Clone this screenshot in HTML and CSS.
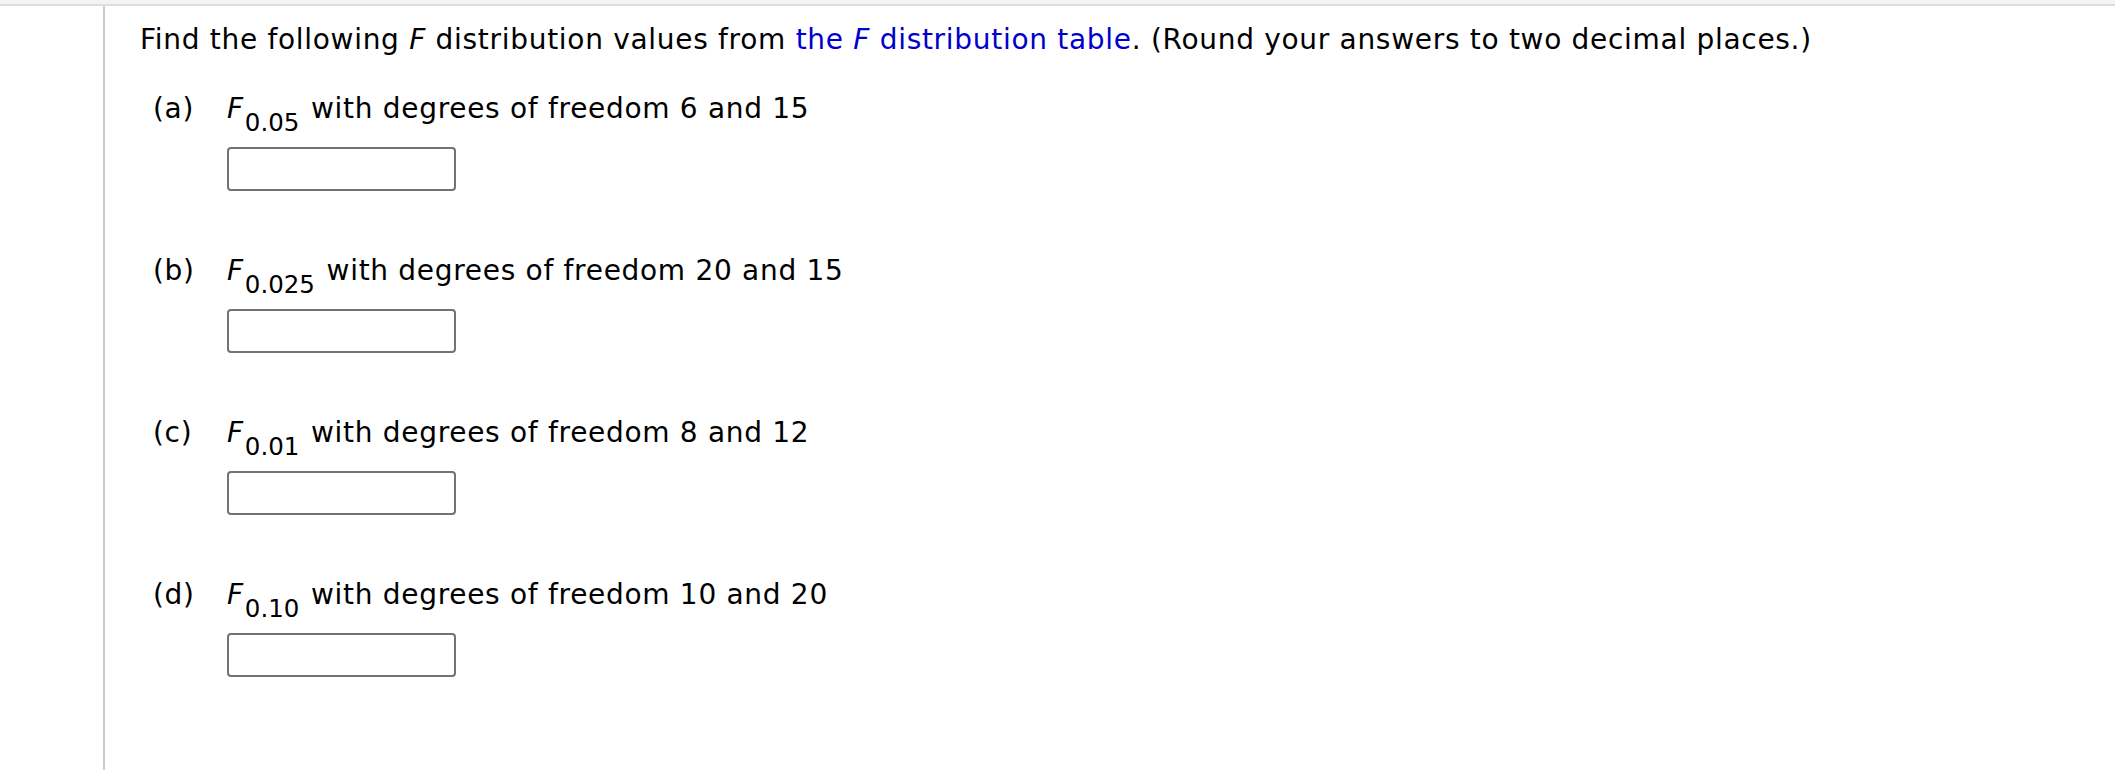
FILE: index.html
```html
<!DOCTYPE html>
<html lang="en">
<head>
<meta charset="utf-8">
<title>F distribution values</title>
<link rel="stylesheet" href="styles.css">
</head>
<body>
<div class="topbar"></div>
<div class="main">
  <div class="gutter"></div>
  <div class="content">
    <p class="question">Find the following <i>F</i> distribution values from <a class="link" href="#">the <i>F</i> distribution table</a>. (Round your answers to two decimal places.)</p>

    <div class="part">
      <span class="label">(a)</span>
      <div class="body">
        <div class="prompt"><i>F</i><sub>0.05</sub> with degrees of freedom 6 and 15</div>
        <input class="answer" type="text">
      </div>
    </div>

    <div class="part">
      <span class="label">(b)</span>
      <div class="body">
        <div class="prompt"><i>F</i><sub>0.025</sub> with degrees of freedom 20 and 15</div>
        <input class="answer" type="text">
      </div>
    </div>

    <div class="part">
      <span class="label">(c)</span>
      <div class="body">
        <div class="prompt"><i>F</i><sub>0.01</sub> with degrees of freedom 8 and 12</div>
        <input class="answer" type="text">
      </div>
    </div>

    <div class="part">
      <span class="label">(d)</span>
      <div class="body">
        <div class="prompt"><i>F</i><sub>0.10</sub> with degrees of freedom 10 and 20</div>
        <input class="answer" type="text">
      </div>
    </div>
  </div>
</div>
</body>
</html>
```

FILE: styles.css
```css
html, body {
  margin: 0;
  padding: 0;
  background: #ffffff;
}

body {
  font-family: "DejaVu Sans", Verdana, sans-serif;
  font-size: 28px;
  letter-spacing: 0.7px;
  color: #000000;
  height: 770px;
  display: flex;
  flex-direction: column;
}

.topbar {
  height: 4px;
  background: #f4f4f4;
  border-bottom: 2px solid #dddddd;
  flex: none;
}

.main {
  flex: 1;
  display: flex;
}

.gutter {
  width: 103px;
  flex: none;
}

.content {
  flex: 1;
  border-left: 2px solid #cccccc;
  padding: 18px 0 0 35px;
}

.question {
  margin: 0 0 37px 0;
  line-height: 32px;
}

.link {
  color: #0000cc;
  text-decoration: none;
}

.part {
  display: grid;
  grid-template-columns: 74px auto;
  padding-left: 13px;
  margin-bottom: 64px;
}

.label {
  line-height: 32px;
}

.prompt {
  line-height: 32px;
  white-space: nowrap;
}

.prompt i {
  margin-right: 1px;
}

.prompt sub {
  font-size: 24.5px;
  letter-spacing: 0;
  line-height: 0;
  vertical-align: -13px;
  margin-right: 2px;
}

.answer {
  display: block;
  box-sizing: border-box;
  width: 229px;
  height: 44px;
  margin: 22px 0 0 0;
  border: 2px solid #737373;
  border-radius: 4px;
  background: #ffffff;
  padding: 0 6px;
  font-family: inherit;
  font-size: 24px;
}
```
